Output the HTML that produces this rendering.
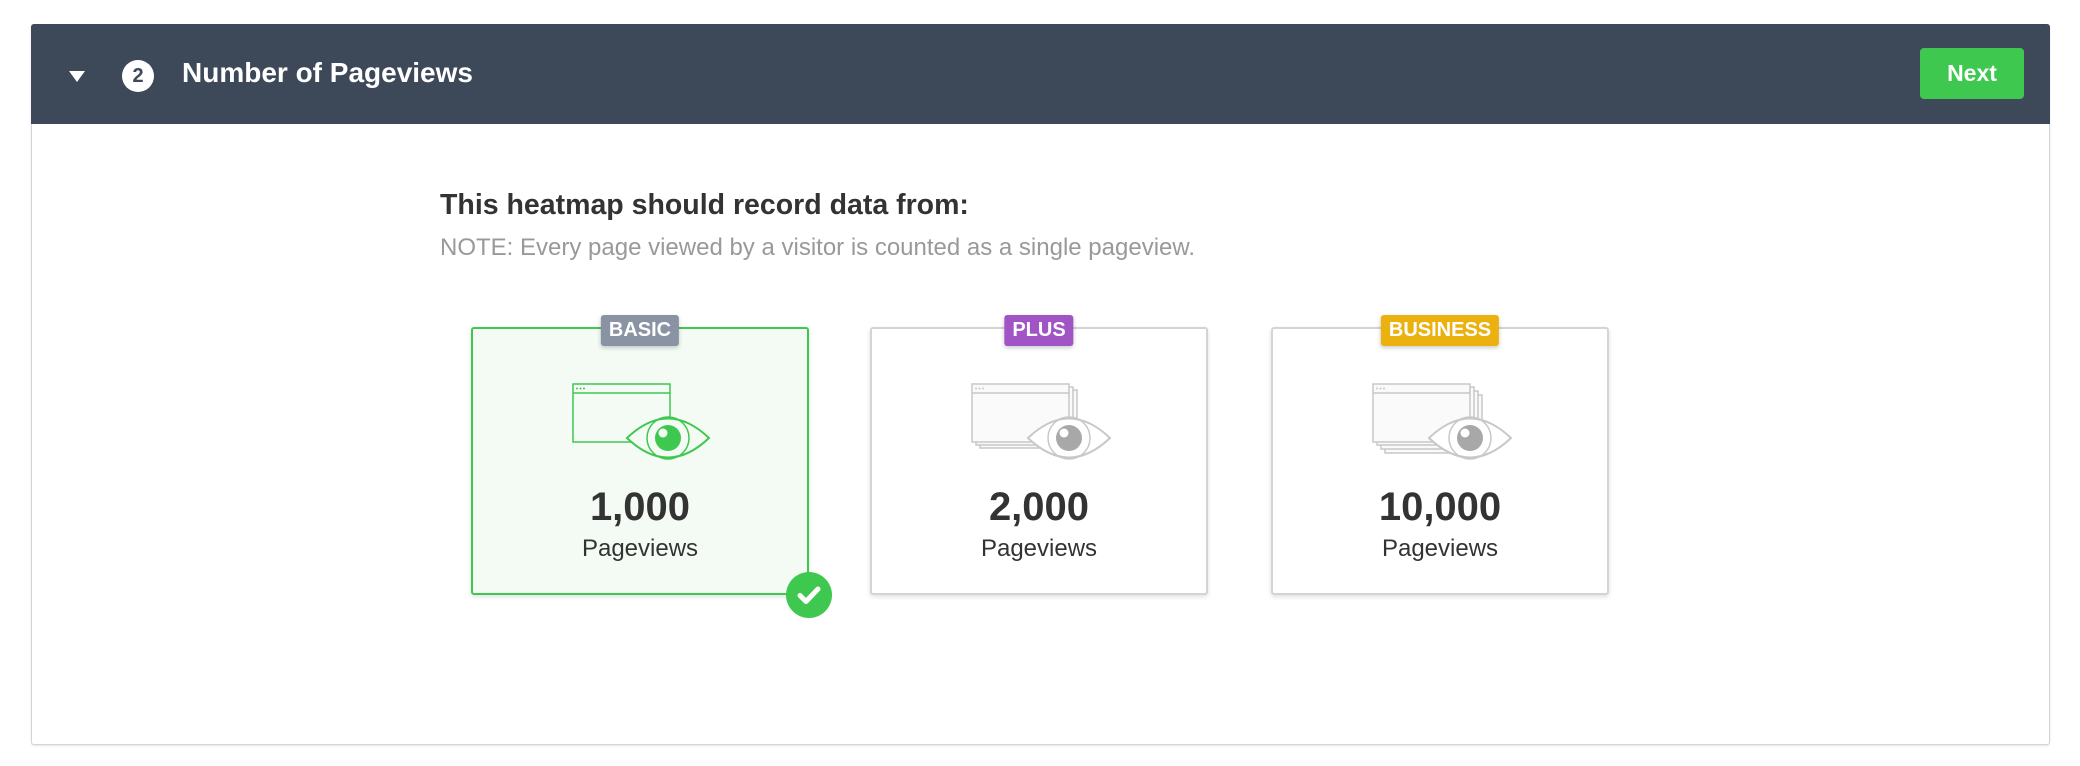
<!DOCTYPE html>
<html><head><style>
body{margin:0;width:2080px;height:766px;background:#fff;font-family:"Liberation Sans",sans-serif;position:relative;overflow:hidden}
.panel{position:absolute;left:31px;top:24px;width:2019px;height:721px;border:1px solid #cfd5da;border-radius:3px;box-sizing:border-box;box-shadow:0 1px 2px rgba(0,0,0,.1)}
.hdr{position:absolute;left:31px;top:24px;width:2019px;height:100px;background:#3d4859;border-radius:3px 3px 0 0}
.tri{position:absolute;left:69px;top:71px;width:0;height:0;border-left:8px solid transparent;border-right:8px solid transparent;border-top:11px solid #fff}
.num{position:absolute;left:122px;top:60px;width:32px;height:32px;border-radius:50%;background:#fff;color:#3d4859;font-weight:bold;font-size:20px;text-align:center;line-height:32px}
.title{position:absolute;left:182px;top:57px;color:#fff;font-weight:bold;font-size:28px}
.next{position:absolute;left:1920px;top:48px;width:104px;height:51px;background:#3fc84f;border-radius:4px;color:#fff;font-weight:bold;font-size:23px;text-align:center;line-height:51px}
.h{position:absolute;left:440px;top:189px;font-size:28.5px;font-weight:bold;color:#333}
.note{position:absolute;left:440px;top:234px;font-size:24px;color:#999}
.card{position:absolute;top:327px;width:338px;height:268px;box-sizing:border-box;border:2px solid #d4d4d4;border-radius:3px;background:#fff;box-shadow:0 2px 5px rgba(0,0,0,.12)}
.card.sel{border-color:#3fc84f;background:#f4fbf4}
.badge{position:absolute;top:-14px;left:50%;transform:translateX(-50%);height:31px;line-height:31px;padding:0 8px;border-radius:3px;color:#fff;font-weight:bold;font-size:20px;box-shadow:0 2px 4px rgba(0,0,0,.2)}
.big{position:absolute;left:0;right:0;top:156px;text-align:center;font-size:40px;font-weight:bold;color:#333}
.sm{position:absolute;left:0;right:0;top:206px;text-align:center;font-size:24px;color:#333}
svg{position:absolute;left:0;top:0}
.chk{position:absolute;left:786px;top:572px;width:46px;height:46px;border-radius:50%;background:#3fc84f}
</style></head><body>
<div class="panel"></div>
<div class="hdr"></div>
<div class="tri"></div>
<div class="num">2</div>
<div class="title">Number of Pageviews</div>
<div class="next">Next</div>
<div class="h">This heatmap should record data from:</div>
<div class="note">NOTE: Every page viewed by a visitor is counted as a single pageview.</div>

<div class="card sel" style="left:471px">
<svg width="338" height="268" viewBox="0 0 338 268">
<g fill="none" stroke="#3fc84f" stroke-width="1.5">
<rect x="100" y="55" width="97" height="58" fill="#f4fbf4"/><line x1="100" y1="64" x2="197" y2="64"/>
</g>
<g fill="#3fc84f"><circle cx="104" cy="59.5" r="1"/><circle cx="107.5" cy="59.5" r="1"/><circle cx="111" cy="59.5" r="1"/></g>
<path d="M154 109 Q195 70 236 109 Q195 148 154 109Z" fill="#f4fbf4" stroke="#3fc84f" stroke-width="2"/>
<circle cx="195" cy="109" r="21" fill="none" stroke="#3fc84f" stroke-width="1.5"/>
<circle cx="195" cy="109" r="13" fill="#3fc84f"/><circle cx="190" cy="104" r="4.5" fill="#f4fbf4"/>
</svg>
<div class="badge" style="background:#8a93a3">BASIC</div>
<div class="big">1,000</div><div class="sm">Pageviews</div>
</div>

<div class="card" style="left:870px">
<svg width="338" height="268" viewBox="0 0 338 268">
<g fill="#fafafa" stroke="#c8c8c8" stroke-width="1.5">
<rect x="108" y="61" width="97" height="58"/><rect x="104" y="58" width="97" height="58"/><rect x="100" y="55" width="97" height="58"/>
<line x1="100" y1="64" x2="197" y2="64"/></g>
<g fill="#c8c8c8"><circle cx="104" cy="59.5" r="1"/><circle cx="107.5" cy="59.5" r="1"/><circle cx="111" cy="59.5" r="1"/></g>
<path d="M156 109 Q197 70 238 109 Q197 148 156 109Z" fill="#fff" stroke="#c8c8c8" stroke-width="2"/>
<circle cx="197" cy="109" r="21" fill="none" stroke="#c8c8c8" stroke-width="1.5"/>
<circle cx="197" cy="109" r="13" fill="#a8a8a8"/><circle cx="192" cy="104" r="4.5" fill="#fff"/>
</svg>
<div class="badge" style="background:#a054c6">PLUS</div>
<div class="big">2,000</div><div class="sm">Pageviews</div>
</div>

<div class="card" style="left:1271px">
<svg width="338" height="268" viewBox="0 0 338 268">
<g fill="#fafafa" stroke="#c8c8c8" stroke-width="1.5">
<rect x="112" y="66" width="97" height="58"/><rect x="108" y="62" width="97" height="58"/><rect x="104" y="58" width="97" height="58"/><rect x="100" y="55" width="97" height="58"/>
<line x1="100" y1="64" x2="197" y2="64"/></g>
<g fill="#c8c8c8"><circle cx="104" cy="59.5" r="1"/><circle cx="107.5" cy="59.5" r="1"/><circle cx="111" cy="59.5" r="1"/></g>
<path d="M156 109 Q197 70 238 109 Q197 148 156 109Z" fill="#fff" stroke="#c8c8c8" stroke-width="2"/>
<circle cx="197" cy="109" r="21" fill="none" stroke="#c8c8c8" stroke-width="1.5"/>
<circle cx="197" cy="109" r="13" fill="#a8a8a8"/><circle cx="192" cy="104" r="4.5" fill="#fff"/>
</svg>
<div class="badge" style="background:#ebb20f">BUSINESS</div>
<div class="big">10,000</div><div class="sm">Pageviews</div>
</div>

<div class="chk"><svg width="46" height="46" viewBox="0 0 46 46"><path d="M14 23.5 L20 29.5 L32 17" fill="none" stroke="#fff" stroke-width="5" stroke-linecap="round" stroke-linejoin="round"/></svg></div>
</body></html>
